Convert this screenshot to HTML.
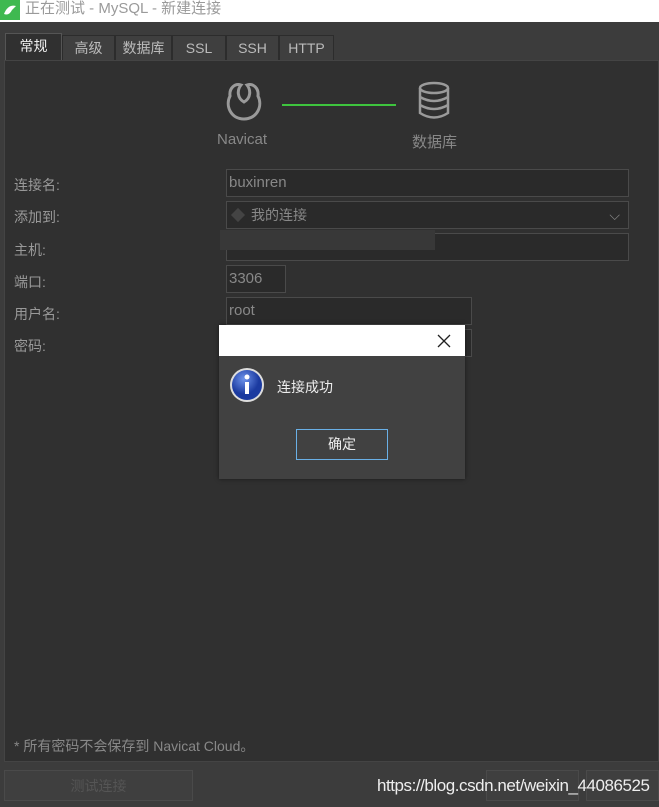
<!DOCTYPE html>
<html><head><meta charset="utf-8"><style>
*{margin:0;padding:0;box-sizing:border-box}
body{width:659px;height:807px;background:#3c3c3c;position:relative;overflow:hidden;font-family:"Liberation Sans","Noto Sans CJK SC",sans-serif;font-size:14px;color:#999}
.abs{position:absolute}
.title{left:0;top:0;width:659px;height:22px;background:#fff;color:#9a9a9a;font-size:15px;line-height:18px}
.tab{top:35px;height:26px;background:#3f3f3f;border:1px solid #2c2c2c;border-bottom:none;color:#bbb;text-align:center;line-height:25px;font-size:14px}
.panel{left:4px;top:60px;width:655px;height:702px;background:#303030;border:1px solid #444}
.lbl{left:14px;color:#999;font-size:14px}
.inp{background:#2a2a2a;border:1px solid #4a4a4a;color:#888;font-size:15px;padding-left:2px;line-height:26px}
</style></head><body>
<div class="abs title"><svg class="abs" style="left:0;top:0" width="20" height="20"><rect width="20" height="20" fill="#3fb950"/><path d="M4 14 Q8 4 16 6 L12 10 Q9 16 4 14Z" fill="#fff"/></svg><span class="abs" style="left:25px;top:0">正在测试 - MySQL - 新建连接</span></div>
<div class="abs tab" style="left:5px;top:33px;width:57px;height:28px;background:#303030;color:#eee;border-color:#555">常规</div>
<div class="abs tab" style="left:62px;width:53px">高级</div>
<div class="abs tab" style="left:115px;width:57px">数据库</div>
<div class="abs tab" style="left:172px;width:54px">SSL</div>
<div class="abs tab" style="left:226px;width:53px">SSH</div>
<div class="abs tab" style="left:279px;width:55px">HTTP</div>
<div class="abs panel"></div>
<svg class="abs" style="left:221px;top:80px" width="46" height="42" fill="none" stroke="#9a9a9a" stroke-width="3" stroke-linecap="round"><path d="M9 16 C4 26 10 39 23 39 C36 39 42 26 37 16"/><path d="M9 16 C8 8 14 3 20 5 C16 10 16 18 23 22 C30 18 30 10 26 5 C32 3 38 8 37 16"/></svg>
<div class="abs" style="left:282px;top:104px;width:114px;height:2px;background:#3ec43e"></div>
<svg class="abs" style="left:418px;top:80px" width="32" height="42" fill="none" stroke="#9a9a9a" stroke-width="2.5"><ellipse cx="16" cy="8" rx="14" ry="5"/><path d="M2 8 V33 Q16 42 30 33 V8 M2 17 Q16 25 30 17 M2 25 Q16 33 30 25"/></svg>
<div class="abs" style="left:217px;top:131px;color:#888;font-size:15px">Navicat</div>
<div class="abs" style="left:412px;top:131px;color:#888;font-size:15px">数据库</div>
<div class="abs lbl" style="top:175px">连接名:</div>
<div class="abs lbl" style="top:207px">添加到:</div>
<div class="abs lbl" style="top:240px">主机:</div>
<div class="abs lbl" style="top:272px">端口:</div>
<div class="abs lbl" style="top:304px">用户名:</div>
<div class="abs lbl" style="top:336px">密码:</div>
<div class="abs inp" style="left:226px;top:169px;width:403px;height:28px">buxinren</div>
<div class="abs inp" style="left:226px;top:201px;width:403px;height:28px;font-size:14px;padding-left:24px"><span class="abs" style="left:6px;top:8px;width:10px;height:10px;background:#444;transform:rotate(45deg)"></span>我的连接<span class="abs" style="right:8px;top:0;color:#888">⌵</span></div>
<div class="abs inp" style="left:226px;top:233px;width:403px;height:28px"></div>
<div class="abs" style="left:220px;top:230px;width:215px;height:20px;background:#383838"></div>
<div class="abs inp" style="left:226px;top:265px;width:60px;height:28px">3306</div>
<div class="abs inp" style="left:226px;top:297px;width:246px;height:28px">root</div>
<div class="abs inp" style="left:226px;top:329px;width:246px;height:28px"></div>
<div class="abs" style="left:14px;top:736px;color:#888;font-size:14px">* 所有密码不会保存到 Navicat Cloud。</div>
<div class="abs" style="left:4px;top:770px;width:189px;height:31px;border:1px solid #4a4a4a;background:#3f3f3f;color:#555;text-align:center;line-height:30px">测试连接</div>
<div class="abs" style="left:486px;top:770px;width:93px;height:31px;border:1px solid #4a4a4a;background:#3f3f3f"></div>
<div class="abs" style="left:586px;top:770px;width:73px;height:31px;border:1px solid #4a4a4a;background:#3f3f3f"></div>
<div class="abs" style="left:377px;top:776px;color:#eee;font-size:17px;letter-spacing:-0.45px">https://blog.csdn.net/weixin_44086525</div>
<div class="abs" style="left:219px;top:325px;width:246px;height:154px;background:#414141;box-shadow:0 0 4px rgba(0,0,0,.5)">
<div class="abs" style="left:0;top:0;width:246px;height:31px;background:#fff"></div>
<svg class="abs" style="left:218px;top:9px" width="14" height="14" stroke="#222" stroke-width="1.3"><path d="M1 1 L13 13 M13 1 L1 13"/></svg>
<svg class="abs" style="left:10px;top:42px" width="37" height="37"><defs><radialGradient id="g" cx=".4" cy=".3"><stop offset="0" stop-color="#6e93ea"/><stop offset="1" stop-color="#1b3aa0"/></radialGradient></defs><circle cx="18" cy="18" r="17" fill="#ddd"/><circle cx="18" cy="18" r="15" fill="url(#g)"/><circle cx="18" cy="10" r="2.5" fill="#fff"/><rect x="16" y="15" width="4" height="12" fill="#fff"/></svg>
<div class="abs" style="left:58px;top:52px;color:#eee;font-size:14px">连接成功</div>
<div class="abs" style="left:77px;top:104px;width:92px;height:31px;border:1px solid #6ab0e6;color:#eee;text-align:center;line-height:29px">确定</div>
</div>
</body></html>
